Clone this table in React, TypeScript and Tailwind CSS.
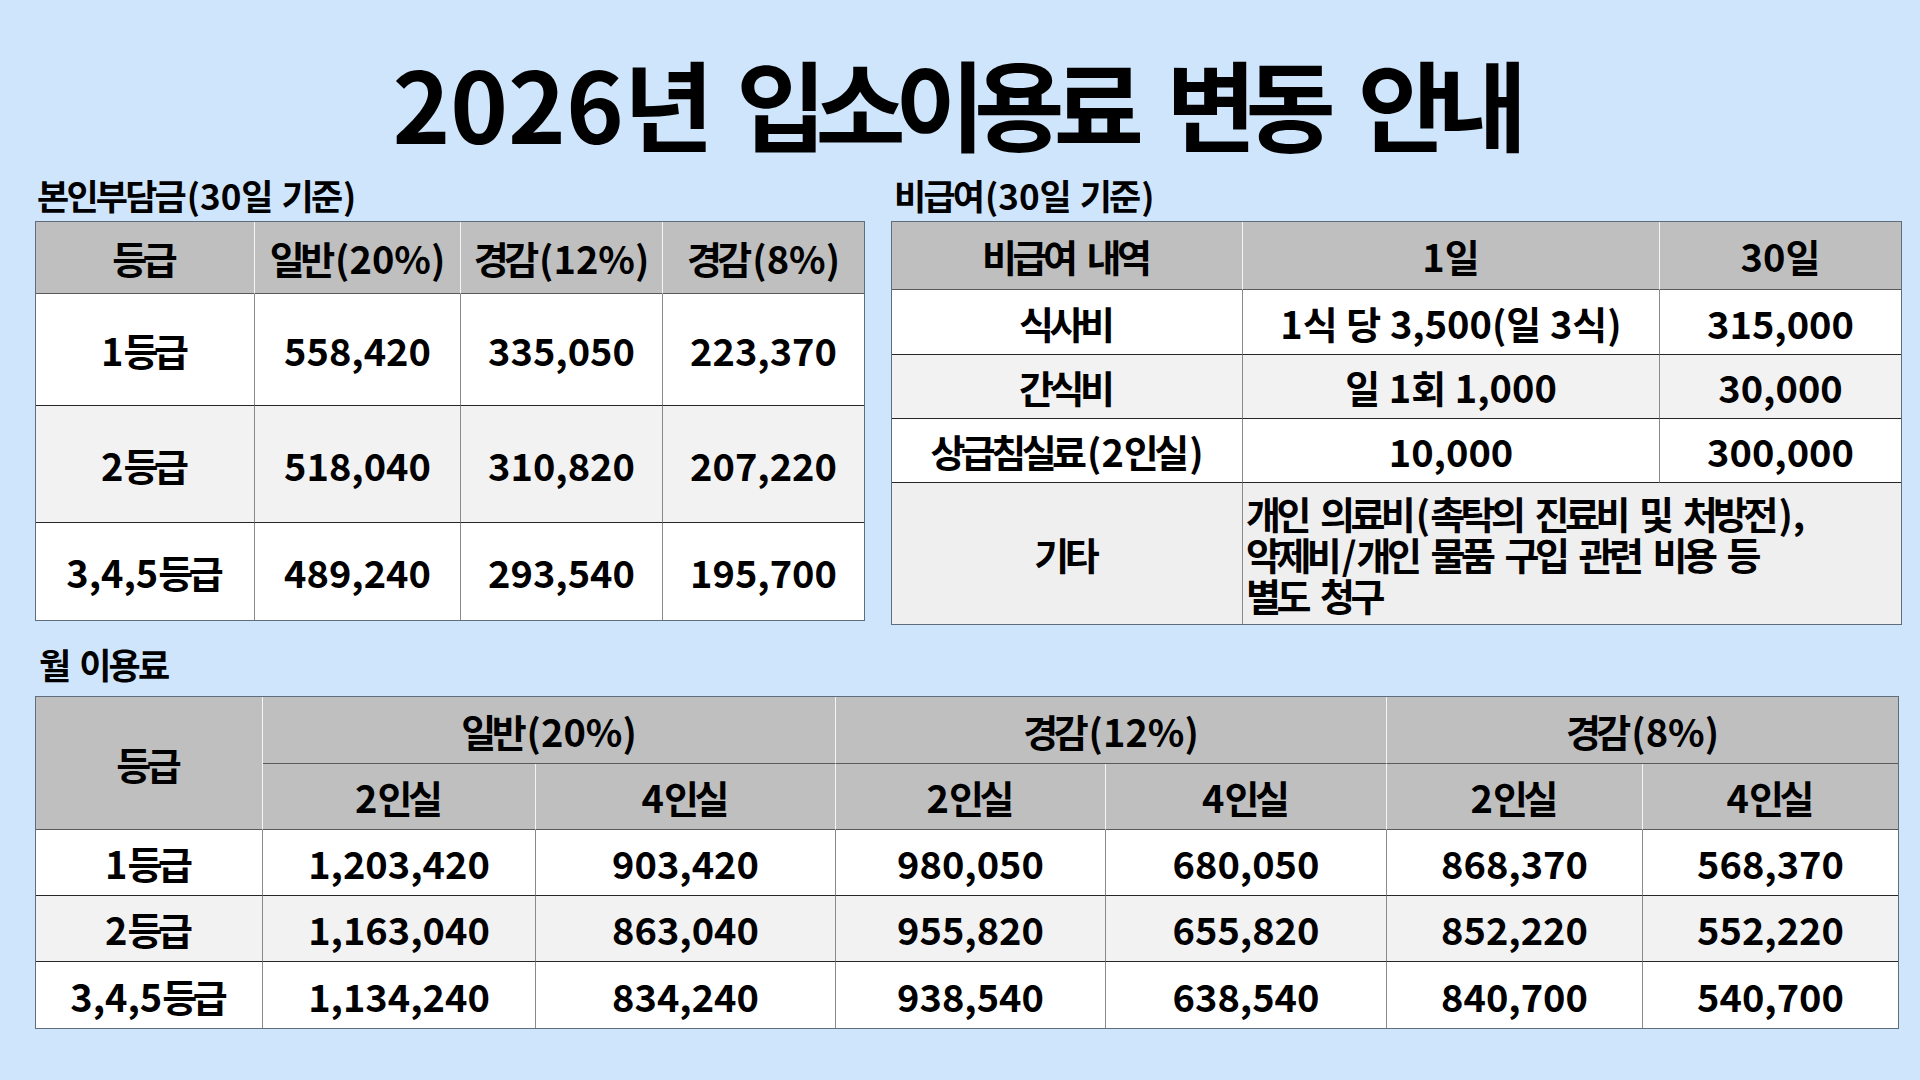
import React from "react";

function K({ t, tr = "tracking-[-0.12em]" }: { t: string; tr?: string }) {
  const parts = t.split(/([가-힣]+)/);
  return (
    <>
      {parts.map((p, i) =>
        /[가-힣]/.test(p) ? (
          <React.Fragment key={i}>
            {p.length > 1 && <span className={tr}>{p.slice(0, -1)}</span>}
            <span>{p.slice(-1)}</span>
          </React.Fragment>
        ) : (
          <span key={i}>{p}</span>
        )
      )}
    </>
  );
}

const HEAD = "bg-[#bfbfbf] border-b border-b-[#5a5a5a] border-r border-r-[#f4f4f4]";

function Cell({
  children,
  className = "",
}: {
  children?: React.ReactNode;
  className?: string;
}) {
  return (
    <div className={"flex items-center justify-center whitespace-nowrap " + className}>
      <span className="whitespace-pre">{children}</span>
    </div>
  );
}

const leftRows = [
  { bg: "bg-white", c: ["1등급", "558,420", "335,050", "223,370"] },
  { bg: "bg-[#f2f2f2]", c: ["2등급", "518,040", "310,820", "207,220"] },
  { bg: "bg-white", c: ["3,4,5등급", "489,240", "293,540", "195,700"] },
];

const bottomRows = [
  { bg: "bg-white", c: ["1등급", "1,203,420", "903,420", "980,050", "680,050", "868,370", "568,370"] },
  { bg: "bg-[#f2f2f2]", c: ["2등급", "1,163,040", "863,040", "955,820", "655,820", "852,220", "552,220"] },
  { bg: "bg-white", c: ["3,4,5등급", "1,134,240", "834,240", "938,540", "638,540", "840,700", "540,700"] },
];

function LeftTable() {
  return (
    <div className="grid grid-cols-[219px_206px_202px_201px] grid-rows-[72px_112px_117px_97px] w-[830px] border border-[#5f6e7d] text-[38px]">
      {["등급", "일반(20%)", "경감(12%)", "경감(8%)"].map((h, i) => (
        <Cell key={h} className={HEAD + (i === 3 ? " border-r-0" : "")}>
          <K t={h} />
        </Cell>
      ))}
      {leftRows.map((r, ri) =>
        r.c.map((v, ci) => (
          <Cell
            key={ri + "-" + ci}
            className={
              r.bg +
              (ci < 3 ? " border-r border-r-[#8a8a8a]" : "") +
              (ri < 2 ? " border-b border-b-[#262626]" : "")
            }
          >
            <K t={v} />
          </Cell>
        ))
      )}
    </div>
  );
}

function RightTable() {
  const body = [
    { bg: "bg-white", c: ["식사비", "1식 당 3,500(일 3식)", "315,000"] },
    { bg: "bg-[#f2f2f2]", c: ["간식비", "일 1회 1,000", "30,000"] },
    { bg: "bg-white", c: ["상급침실료(2인실)", "10,000", "300,000"] },
  ];
  return (
    <div className="grid grid-cols-[351px_417px_241px] grid-rows-[68px_65px_64px_64px_141px] w-[1011px] border border-[#5f6e7d] text-[38px]">
      {["비급여 내역", "1일", "30일"].map((h, i) => (
        <Cell key={h} className={HEAD + (i === 2 ? " border-r-0" : "")}>
          <K t={h} />
        </Cell>
      ))}
      {body.map((r, ri) =>
        r.c.map((v, ci) => (
          <Cell
            key={ri + "-" + ci}
            className={
              r.bg +
              (ci < 2 ? " border-r border-r-[#8a8a8a]" : "") +
              " border-b border-b-[#262626]"
            }
          >
            <K t={v} />
          </Cell>
        ))
      )}
      <Cell className="bg-[#efefef] border-r border-r-[#8a8a8a]">
        <K t="기타" />
      </Cell>
      <div className="col-span-2 bg-[#efefef] flex flex-col justify-center pl-[3px] whitespace-nowrap">
        <span className="block h-[41px] leading-[41px]">
          <K t="개인 의료비(촉탁의 진료비 및 처방전)," />
        </span>
        <span className="block h-[41px] leading-[41px]">
          <K t="약제비/개인 물품 구입 관련 비용 등" />
        </span>
        <span className="block h-[41px] leading-[41px]">
          <K t="별도 청구" />
        </span>
      </div>
    </div>
  );
}

function BottomTable() {
  const groups = ["일반(20%)", "경감(12%)", "경감(8%)"];
  return (
    <div className="grid grid-cols-[227px_273px_300px_270px_281px_256px_255px] grid-rows-[67px_66px_66px_66px_66px] w-[1864px] border border-[#5f6e7d] text-[38px]">
      <Cell className="row-span-2 bg-[#bfbfbf] border-b border-b-[#5a5a5a] border-r border-r-[#f4f4f4]">
        <K t="등급" />
      </Cell>
      {groups.map((g, i) => (
        <Cell
          key={g}
          className={
            "col-span-2 bg-[#bfbfbf] border-b border-b-[#5a5a5a]" +
            (i < 2 ? " border-r border-r-[#f4f4f4]" : "")
          }
        >
          <K t={g} />
        </Cell>
      ))}
      {[0, 1, 2, 3, 4, 5].map((i) => (
        <Cell key={"s" + i} className={HEAD + (i === 5 ? " border-r-0" : "")}>
          <K t={i % 2 === 0 ? "2인실" : "4인실"} />
        </Cell>
      ))}
      {bottomRows.map((r, ri) =>
        r.c.map((v, ci) => (
          <Cell
            key={ri + "-" + ci}
            className={
              r.bg +
              (ci < 6 ? " border-r border-r-[#8a8a8a]" : "") +
              (ri < 2 ? " border-b border-b-[#262626]" : "")
            }
          >
            <K t={v} />
          </Cell>
        ))
      )}
    </div>
  );
}

export default function App() {
  return (
    <div className="w-[1920px] h-[1080px] bg-[#cfe5fb] pl-[35px] pt-[52px] flex flex-col text-black font-bold font-['Noto_Sans_CJK_KR','Noto_Sans',sans-serif] overflow-hidden">
      <h1 className="w-[1850px] text-center text-[98px] leading-[98px] h-[98px] whitespace-nowrap">
        <K t="2026년 입소이용료 변동 안내" tr="tracking-[-0.11em]" />
      </h1>
      <div className="flex gap-[26px] mt-[27px] items-start">
        <section className="flex flex-col w-[830px]">
          <h2 className="text-[35px] leading-[35px] h-[35px] pl-[2px] mb-[9px] whitespace-nowrap">
            <K t="본인부담금(30일 기준)" tr="tracking-[-0.08em]" />
          </h2>
          <LeftTable />
        </section>
        <section className="flex flex-col w-[1011px]">
          <h2 className="text-[35px] leading-[35px] h-[35px] pl-[3px] mb-[9px] whitespace-nowrap">
            <K t="비급여(30일 기준)" tr="tracking-[-0.08em]" />
          </h2>
          <RightTable />
        </section>
      </div>
      <section className="flex flex-col mt-[21px]">
        <h2 className="text-[35px] leading-[35px] h-[35px] pl-[4px] mb-[15px] whitespace-nowrap">
          <K t="월 이용료" tr="tracking-[-0.08em]" />
        </h2>
        <BottomTable />
      </section>
    </div>
  );
}
